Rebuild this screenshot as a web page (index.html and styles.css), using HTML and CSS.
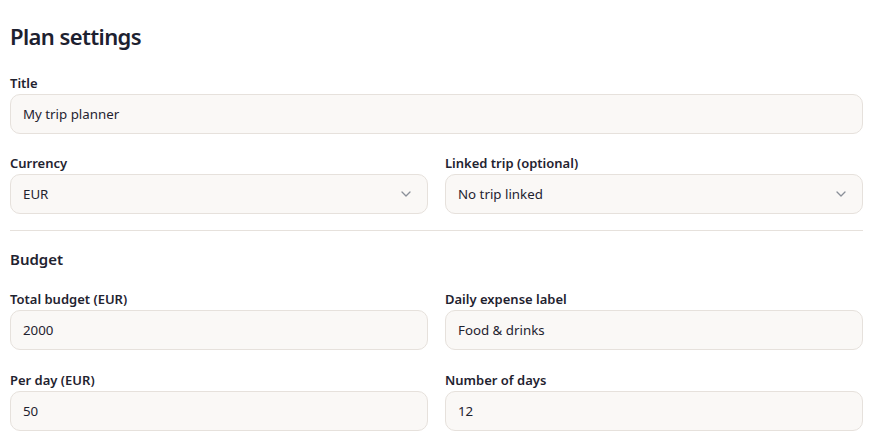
FILE: index.html
```html
<!DOCTYPE html>
<html lang="en">
<head>
<meta charset="utf-8">
<title>Plan settings</title>
<link rel="stylesheet" href="styles.css">
</head>
<body>
<main class="page">
  <h1 class="page-title">Plan settings</h1>

  <div class="field">
    <label class="label">Title</label>
    <div class="input">My trip planner</div>
  </div>

  <div class="row">
    <div class="field">
      <label class="label">Currency</label>
      <div class="input select">
        <span>EUR</span>
        <svg class="chev" width="10" height="6" viewBox="0 0 10 6"><polyline points="1,1 5,5 9,1" fill="none" stroke="#8a8f98" stroke-width="1.3" stroke-linecap="round" stroke-linejoin="round"/></svg>
      </div>
    </div>
    <div class="field">
      <label class="label">Linked trip (optional)</label>
      <div class="input select">
        <span>No trip linked</span>
        <svg class="chev" width="10" height="6" viewBox="0 0 10 6"><polyline points="1,1 5,5 9,1" fill="none" stroke="#8a8f98" stroke-width="1.3" stroke-linecap="round" stroke-linejoin="round"/></svg>
      </div>
    </div>
  </div>

  <hr class="divider">

  <h2 class="section-title">Budget</h2>

  <div class="row">
    <div class="field">
      <label class="label">Total budget (EUR)</label>
      <div class="input">2000</div>
    </div>
    <div class="field">
      <label class="label">Daily expense label</label>
      <div class="input">Food &amp; drinks</div>
    </div>
  </div>

  <div class="row row-last">
    <div class="field">
      <label class="label">Per day (EUR)</label>
      <div class="input">50</div>
    </div>
    <div class="field">
      <label class="label">Number of days</label>
      <div class="input">12</div>
    </div>
  </div>
</main>
</body>
</html>
```

FILE: styles.css
```css
* { box-sizing: border-box; }
html, body { margin: 0; padding: 0; background: #ffffff; }
body {
  font-family: "Noto Sans", "Open Sans", sans-serif;
  color: #1f2330;
}
.page {
  width: 870px;
  padding: 20px 7px 0 10px;
  display: flex;
  flex-direction: column;
  gap: 20px;
}
.page-title {
  margin: 0 0 2px;
  font-size: 22px;
  line-height: 32px;
  font-weight: 600;
  color: #1d2130;
  letter-spacing: -0.6px;
}
.field {
  display: flex;
  flex-direction: column;
  gap: 2px;
  min-width: 0;
}
.label {
  font-size: 13px;
  line-height: 18px;
  font-weight: 600;
  color: #1f2330;
}
.input {
  height: 40px;
  border: 1px solid #e6e1dc;
  border-radius: 10px;
  background: #faf8f6;
  padding: 0 12px;
  display: flex;
  align-items: center;
  font-size: 13.3px;
  color: #1f2330;
}
.select { justify-content: space-between; padding-right: 16px; }
.chev { flex: none; }
.row {
  display: grid;
  grid-template-columns: 1fr 1fr;
  column-gap: 17px;
}
.row-last { margin-top: 1px; }
.divider {
  margin: -4px 0 -3px;
  border: 0;
  border-top: 1px solid #e6e1dc;
  height: 0;
}
.section-title {
  margin: 0;
  font-size: 15px;
  line-height: 22px;
  font-weight: 600;
  color: #1f2330;
}
```
